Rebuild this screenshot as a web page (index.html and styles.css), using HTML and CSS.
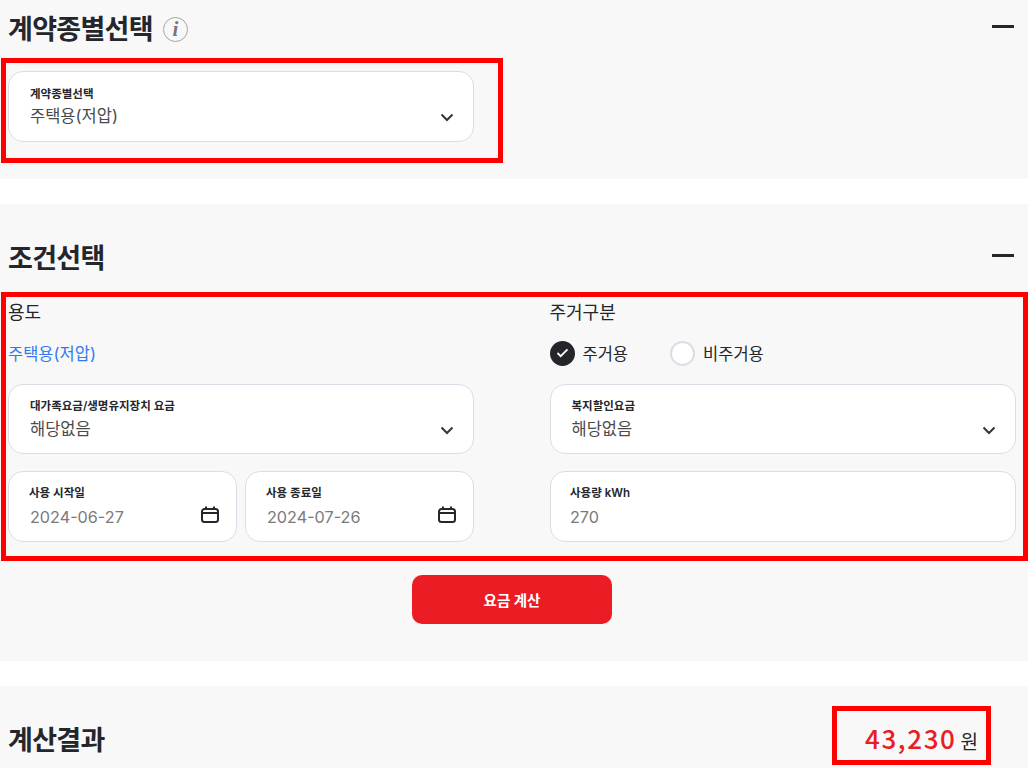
FILE: index.html
```html
<!doctype html>
<html lang="ko">
<head>
<meta charset="utf-8" />
<meta name="viewport" content="width=device-width" />
<title>계산결과</title>
<link rel="stylesheet" href="styles.css">
</head>
<body>

<section class="panel panel--type">
  <div class="panel-head">
    <h2>계약종별선택</h2>
    <span class="info-icon">i</span>
    <span class="collapse"></span>
  </div>
  <div class="field field--half">
    <div class="field-text">
      <span class="field-label">계약종별선택</span>
      <span class="field-value">주택용(저압)</span>
    </div>
    <svg class="chevron" viewBox="0 0 14 9"><path d="M1.5 1.5 7 7l5.5-5.5" /></svg>
  </div>
</section>

<section class="panel panel--cond">
  <div class="panel-head">
    <h2>조건선택</h2>
    <span class="collapse"></span>
  </div>
  <div class="cond-grid">
    <div class="cond-col">
      <h3>용도</h3>
      <div class="cond-row"><span class="usage">주택용(저압)</span></div>
      <div class="field field--select">
        <div class="field-text">
          <span class="field-label">대가족요금/생명유지장치 요금</span>
          <span class="field-value">해당없음</span>
        </div>
        <svg class="chevron" viewBox="0 0 14 9"><path d="M1.5 1.5 7 7l5.5-5.5" /></svg>
      </div>
      <div class="date-row">
        <div class="field field--input">
          <div class="field-text">
            <span class="field-label">사용 시작일</span>
            <span class="field-value field-value--muted">2024-06-27</span>
          </div>
          <svg class="calendar" viewBox="0 0 18 17"><path d="M1 5.500A2.500 2.500 0 0 1 3.500 3h11A2.500 2.500 0 0 1 17 5.500v8a2.500 2.500 0 0 1-2.500 2.500h-11A2.500 2.500 0 0 1 1 13.500zM1 7h16M5 .5V3M13 .5V3" /></svg>
        </div>
        <div class="field field--input">
          <div class="field-text">
            <span class="field-label">사용 종료일</span>
            <span class="field-value field-value--muted">2024-07-26</span>
          </div>
          <svg class="calendar" viewBox="0 0 18 17"><path d="M1 5.500A2.500 2.500 0 0 1 3.500 3h11A2.500 2.500 0 0 1 17 5.500v8a2.500 2.500 0 0 1-2.500 2.500h-11A2.500 2.500 0 0 1 1 13.500zM1 7h16M5 .5V3M13 .5V3" /></svg>
        </div>
      </div>
    </div>

    <div class="cond-col">
      <h3>주거구분</h3>
      <div class="cond-row">
        <label class="radio radio--on">
          <span class="radio-dot"><svg viewBox="0 0 14 11"><path d="M1.500 5.500 5 9l7.500-7.500" /></svg></span>
          주거용
        </label>
        <label class="radio">
          <span class="radio-dot"></span>
          비주거용
        </label>
      </div>
      <div class="field field--select">
        <div class="field-text">
          <span class="field-label">복지할인요금</span>
          <span class="field-value">해당없음</span>
        </div>
        <svg class="chevron" viewBox="0 0 14 9"><path d="M1.5 1.5 7 7l5.5-5.5" /></svg>
      </div>
      <div class="field field--input field--usage">
        <div class="field-text">
          <span class="field-label">사용량 kWh</span>
          <span class="field-value field-value--muted">270</span>
        </div>
      </div>
    </div>
  </div>
  <div class="actions">
    <button class="calc-button">요금 계산</button>
  </div>
</section>

<section class="panel panel--result">
  <div class="panel-head">
    <h2>계산결과</h2>
    <div class="total"><strong>43,230</strong> <span>원</span></div>
  </div>
</section>

<!-- red annotation boxes over the page -->
<div class="mark mark--type"></div>
<div class="mark mark--cond"></div>
<div class="mark mark--total"></div>

</body>
</html>
```

FILE: styles.css
```css
* { box-sizing: border-box; }

html, body { height: 768px; overflow: hidden; }

body {
  position: relative;
  margin: 0;
  background: #fff;
  color: #24262b;
  font-family: Inter, "Noto Sans CJK KR", sans-serif;
}

.panel {
  padding: 0 12px 0 8px;
  background: #f8f8f8;
  margin-bottom: 25px;
}

.panel--type { height: 179px; }
.panel--cond { height: 457px; }
.panel--result { height: 82px; margin-bottom: 0; }

.panel-head {
  display: flex;
  align-items: center;
  height: 54px;
}

.panel--type .panel-head { margin-bottom: 17px; }
.panel--cond .panel-head { height: 97px; padding-top: 5px; }
.panel--result .panel-head { height: 102px; }

h2 {
  margin: 0;
  font-size: 27px;
  font-weight: 700;
  letter-spacing: -0.7px;
}

.panel--cond h2, .panel--result h2 { margin-top: 2px; }

h3 {
  margin: 0;
  height: 39px;
  font-size: 18px;
  font-weight: 400;
  line-height: 24px;
}

.info-icon {
  width: 25px;
  height: 25px;
  margin: 5px 0 0 10px;
  border: 1.5px solid #a5a5a5;
  border-radius: 50%;
  color: #777;
  font: italic 700 21px/22px "Liberation Serif", serif;
  text-align: center;
}

.collapse {
  width: 22px;
  height: 3px;
  margin-left: auto;
  margin-right: 2px;
  background: #24262b;
}

.panel--type .collapse { margin-top: -2px; }

.field {
  display: flex;
  align-items: center;
  justify-content: space-between;
  height: 71px;
  padding: 0 19px 0 21px;
  background: #fff;
  border: 1px solid #dcdce6;
  border-radius: 15px;
}

.field--half { width: 466px; }
.field--select { height: 70px; }
.field--input { flex: 1; padding: 0 17px 0 20px; }
.field--usage { padding-left: 19.5px; }

.field-text {
  display: flex;
  flex-direction: column;
}

.field-label {
  font-size: 11.5px;
  font-weight: 600;
  line-height: 16px;
}

.field-value {
  margin-top: 3px;
  font-size: 16.5px;
  line-height: 22px;
  color: #4a4a4a;
}

.field--select .field-value { margin-top: 4px; }

.field-value--muted {
  margin-top: 5px;
  margin-left: 1px;
  font-size: 16.2px;
  color: #7a7a7a;
}

.field--usage .field-value { margin-left: 0; }

.chevron {
  width: 14px;
  height: 9px;
  margin-top: 22px;
  fill: none;
  stroke: #33353a;
  stroke-width: 2;
}

.calendar {
  width: 18px;
  height: 17px;
  margin-top: 16px;
  fill: none;
  stroke: #24262b;
  stroke-width: 2;
}

.cond-grid {
  display: grid;
  grid-template-columns: 466px 466.5px;
  column-gap: 75.5px;
}

.cond-col {
  display: flex;
  flex-direction: column;
  gap: 17px;
}

.cond-col h3 { margin-bottom: -17px; }

.cond-row {
  display: flex;
  align-items: center;
  height: 26px;
  margin-bottom: 1px;
}

.usage {
  font-size: 16.5px;
  color: #3478f0;
}

.radio {
  display: flex;
  align-items: center;
  gap: 8px;
  margin-right: 42px;
  font-size: 16.5px;
}

.radio-dot {
  display: flex;
  align-items: center;
  justify-content: center;
  width: 25px;
  height: 25px;
  border: 2px solid #dcdce6;
  border-radius: 50%;
  background: #fff;
}

.radio--on .radio-dot {
  border-color: #24262b;
  background: #24262b;
}

.radio-dot svg {
  width: 13px;
  height: 10px;
  fill: none;
  stroke: #fff;
  stroke-width: 2;
}

.date-row {
  display: flex;
  gap: 8px;
}

.actions {
  display: flex;
  justify-content: center;
  margin-top: 33px;
}

.calc-button {
  width: 200px;
  height: 49px;
  border: 0;
  border-radius: 10px;
  background: #ec1c24;
  color: #fff;
  font-family: inherit;
  font-size: 14.5px;
  font-weight: 700;
}

.total {
  display: flex;
  align-items: baseline;
  gap: 4px;
  margin-left: auto;
  margin-right: 38px;
}

.total strong {
  color: #ec1c24;
  font-family: "Noto Sans CJK KR", sans-serif;
  font-size: 26px;
  font-weight: 500;
  letter-spacing: 1.6px;
}

.total span { font-size: 19px; }

.mark {
  position: absolute;
  border: 5px solid #f00;
  pointer-events: none;
}

.mark--type { left: 1px; top: 58px; width: 502px; height: 105px; }
.mark--cond { left: 1px; top: 292px; width: 1027px; height: 269px; }
.mark--total { left: 832px; top: 706px; width: 159px; height: 59px; }
```
